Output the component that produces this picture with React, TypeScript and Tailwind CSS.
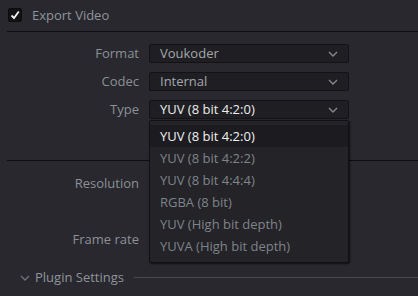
import React from 'react';

const Chevron: React.FC<{ className?: string }> = ({ className }) => (
  <svg width="10" height="6" viewBox="0 0 10 6" className={className}>
    <path d="M1 1 L5 5 L9 1" fill="none" stroke="currentColor" strokeWidth="1.3" />
  </svg>
);

const Select: React.FC<{ value: string; bright?: boolean }> = ({ value, bright }) => (
  <div className="ml-[10px] w-[200px] h-[19px] rounded-[2px] border border-[#131316] bg-[#1f1f23] flex items-center pl-[10px] pr-[10px]">
    <span className={bright ? 'flex-1 text-[#ececec]' : 'flex-1 text-[#a3a7ad]'}>{value}</span>
    <Chevron className="text-[#8a8a8e]" />
  </div>
);

const options = [
  'YUV (8 bit 4:2:0)',
  'YUV (8 bit 4:2:2)',
  'YUV (8 bit 4:4:4)',
  'RGBA (8 bit)',
  'YUV (High bit depth)',
  'YUVA (High bit depth)',
];

export default function App() {
  return (
    <div
      className="relative w-[418px] h-[296px] overflow-hidden bg-[#28282e] text-[13px] leading-none text-[#8c9096]"
      style={{ fontFamily: '"Open Sans", "Noto Sans", sans-serif' }}
    >
      <div className="h-[31px] pl-[8px] flex items-center gap-[10px]">
        <div className="w-[14px] h-[14px] -mt-[2px] rounded-[2px] border border-[#0c0c0e] bg-[#131315] flex items-center justify-center">
          <svg width="10" height="10" viewBox="0 0 10 10">
            <path d="M1.5 5.5 L4 8 L8.8 1.5" fill="none" stroke="#f2f2f2" strokeWidth="1.8" />
          </svg>
        </div>
        <span className="text-[#8f949b]">Export Video</span>
      </div>
      <div className="ml-[7px] h-px bg-[#0e0e10]" />

      <div className="mt-[12px] flex flex-col gap-[9px]">
        <div className="flex items-center">
          <span className="w-[139px] text-right">Format</span>
          <Select value="Voukoder" />
        </div>
        <div className="flex items-center">
          <span className="w-[139px] text-right">Codec</span>
          <Select value="Internal" />
        </div>
        <div className="relative flex items-center">
          <span className="w-[139px] text-right">Type</span>
          <Select value="YUV (8 bit 4:2:0)" bright />
          <div className="absolute z-10 left-[149px] top-[20px] w-[200px] h-[143px] rounded-[2px] border border-[#111113] bg-[#232328] pt-[4px] shadow-[1px_1px_2px_rgba(0,0,0,0.6)]">
            {options.map((o, i) => (
              <div
                key={o}
                className={
                  i === 0
                    ? 'h-[22px] pl-[10px] flex items-center bg-[#1c1c20] text-[#f0f0f0]'
                    : 'h-[22px] pl-[10px] flex items-center text-[#7f838a]'
                }
              >
                {o}
              </div>
            ))}
          </div>
        </div>
      </div>

      <div className="mt-[41px] ml-[7px] h-px bg-[#0e0e10]" />
      <div className="mt-[16px] w-[139px] text-right">Resolution</div>
      <div className="mt-[43px] w-[139px] text-right">Frame rate</div>

      <div className="mt-[25px] flex items-center">
        <Chevron className="ml-[20px] text-[#6f737a]" />
        <span className="ml-[5px] text-[#8f949b]">Plugin Settings</span>
        <div className="ml-[10px] flex-1 h-px bg-[#46464c]" />
      </div>
    </div>
  );
}
